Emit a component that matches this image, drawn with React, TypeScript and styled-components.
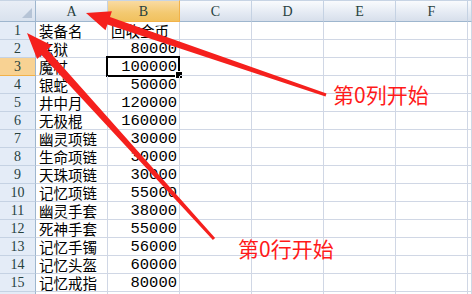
import React from "react";
import styled, { createGlobalStyle, css } from "styled-components";

const Global = createGlobalStyle`
  html, body { margin: 0; padding: 0; background: #ffffff; }
  body { width: 472px; height: 294px; overflow: hidden; }
`;

const Page = styled.div`
  position: relative;
  width: 472px;
  height: 294px;
  overflow: hidden;
  background: #ffffff;
`;

const Sheet = styled.div`
  display: grid;
  grid-template-columns: 36px repeat(6, 72px) 1fr;
  grid-template-rows: 22px;
  grid-auto-rows: 18px;
  width: 472px;
`;

const Corner = styled.div`
  position: relative;
  box-sizing: border-box;
  background: linear-gradient(#e9eef6, #d9e2ee);
  border-right: 1px solid #9eb6ce;
  border-bottom: 1px solid #9eb6ce;
  border-top: 1px solid #c7d4e4;
  &::after {
    content: "";
    position: absolute;
    right: 3px;
    bottom: 3px;
    width: 0;
    height: 0;
    border-left: 10px solid transparent;
    border-bottom: 10px solid #b6c4d6;
  }
`;

const ColHead = styled.div<{ $active?: boolean }>`
  box-sizing: border-box;
  display: flex;
  align-items: center;
  justify-content: center;
  border-top: 1px solid #c7d4e4;
  border-right: 1px solid #c5d2e3;
  border-bottom: 1px solid #9eb6ce;
  background: linear-gradient(#f9fbfd, #e4eaf3 60%, #d7dfeb);
  font-family: "Liberation Serif", serif;
  font-size: 14px;
  line-height: 16px;
  color: #27413e;
  padding-top: 1px;
  ${(p) =>
    p.$active &&
    css`
      background: linear-gradient(#f9dba2, #f3c970 60%, #f1c15f);
      border-right-color: #f2b24a;
      border-bottom-color: #f2b24a;
    `}
`;

const RowHead = styled.div<{ $active?: boolean }>`
  box-sizing: border-box;
  display: flex;
  align-items: center;
  justify-content: center;
  background: #e4ecf7;
  border-right: 1px solid #9eb6ce;
  border-bottom: 1px solid #c5d2e3;
  font-family: "Liberation Serif", serif;
  font-size: 14px;
  line-height: 16px;
  color: #27413e;
  padding-top: 1px;
  ${(p) =>
    p.$active &&
    css`
      background: #f8d293;
      border-bottom-color: #f2b24a;
    `}
`;

const Cell = styled.div<{ $num?: boolean; $selected?: boolean }>`
  position: relative;
  box-sizing: border-box;
  border-right: 1px solid #d0d7e5;
  border-bottom: 1px solid #d0d7e5;
  display: flex;
  align-items: center;
  white-space: nowrap;
  overflow: visible;
  color: #000000;
  padding-top: 1px;
  line-height: 16px;
  ${(p) =>
    p.$num
      ? css`
          justify-content: flex-end;
          padding-right: 2px;
          font-family: "Liberation Mono", monospace;
          font-size: 15.5px;
        `
      : css`
          justify-content: flex-start;
          padding-left: 3px;
          font-family: "Noto Sans CJK SC", sans-serif;
          font-size: 14.5px;
        `}
  ${(p) =>
    p.$selected &&
    css`
      &::before {
        content: "";
        position: absolute;
        left: -2px;
        top: -2px;
        width: 74px;
        height: 21px;
        box-sizing: border-box;
        border: 2px solid #000000;
        pointer-events: none;
      }
      &::after {
        content: "";
        position: absolute;
        right: -3px;
        bottom: -3px;
        width: 6px;
        height: 6px;
        background: #000000;
        outline: 1px solid #ffffff;
      }
    `}
`;

const Overlay = styled.svg`
  position: absolute;
  left: 0;
  top: 0;
  pointer-events: none;
`;

const Label = styled.div`
  position: absolute;
  font-family: "Noto Sans CJK SC", sans-serif;
  font-size: 21px;
  line-height: 24px;
  color: #ff1a1a;
  white-space: nowrap;
`;

const data: [string, string][] = [
  ["装备名", "回收金币"],
  ["炼狱", "80000"],
  ["魔杖", "100000"],
  ["银蛇", "50000"],
  ["井中月", "120000"],
  ["无极棍", "160000"],
  ["幽灵项链", "30000"],
  ["生命项链", "30000"],
  ["天珠项链", "30000"],
  ["记忆项链", "55000"],
  ["幽灵手套", "38000"],
  ["死神手套", "55000"],
  ["记忆手镯", "56000"],
  ["记忆头盔", "60000"],
  ["记忆戒指", "80000"],
  ["", ""],
];

const cols = ["A", "B", "C", "D", "E", "F", ""];

function arrow(
  tx: number,
  ty: number,
  px: number,
  py: number,
  tailW: number,
  neckW: number,
  headLen: number,
  headHalf: number
): string {
  const dx = px - tx;
  const dy = py - ty;
  const L = Math.hypot(dx, dy);
  const ux = dx / L;
  const uy = dy / L;
  const nx = -uy;
  const ny = ux;
  const Nx = px - ux * headLen;
  const Ny = py - uy * headLen;
  const pts: [number, number][] = [
    [tx + (nx * tailW) / 2, ty + (ny * tailW) / 2],
    [Nx + (nx * neckW) / 2, Ny + (ny * neckW) / 2],
    [Nx + nx * headHalf, Ny + ny * headHalf],
    [px, py],
    [Nx - nx * headHalf, Ny - ny * headHalf],
    [Nx - (nx * neckW) / 2, Ny - (ny * neckW) / 2],
    [tx - (nx * tailW) / 2, ty - (ny * tailW) / 2],
  ];
  return pts.map((p) => p.map((v) => v.toFixed(1)).join(",")).join(" ");
}

export default function App() {
  return (
    <Page>
      <Global />
      <Sheet>
        <Corner />
        {cols.map((c, i) => (
          <ColHead key={"h" + i} $active={c === "B"}>
            {c}
          </ColHead>
        ))}
        {data.map((row, r) => (
          <React.Fragment key={r}>
            <RowHead $active={r === 2}>{r < 15 ? r + 1 : ""}</RowHead>
            <Cell>{row[0]}</Cell>
            <Cell $num={r > 0} $selected={r === 2}>
              {row[1]}
            </Cell>
            <Cell />
            <Cell />
            <Cell />
            <Cell />
            <Cell />
          </React.Fragment>
        ))}
      </Sheet>
      <Overlay width={472} height={294} viewBox="0 0 472 294">
        <polygon points={arrow(326, 95, 86, 13, 3, 8, 24, 10)} fill="#f5201d" />
        <polygon points={arrow(214, 239, 27, 33, 3, 8, 26, 10)} fill="#f5201d" />
      </Overlay>
      <Label style={{ left: 333, top: 82 }}>第0列开始</Label>
      <Label style={{ left: 238, top: 236 }}>第0行开始</Label>
    </Page>
  );
}
